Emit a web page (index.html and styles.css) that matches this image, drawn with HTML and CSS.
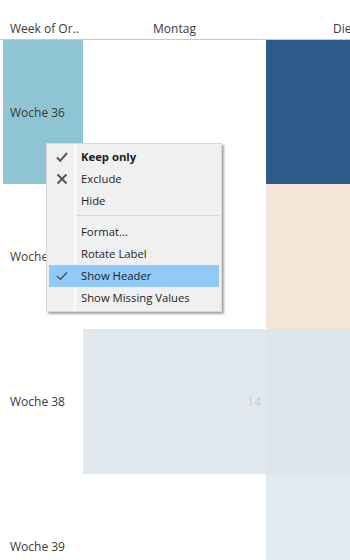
FILE: index.html
```html
<!DOCTYPE html>
<html lang="de">
<head>
    <meta charset="UTF-8">
    <meta name="viewport" content="width=device-width, initial-scale=1.0">
    <title>Wochenansicht</title>
    <link rel="stylesheet" href="styles.css">
</head>
<body>

    <div class="view">
        <div class="grid">
            <div class="head row-label">Week of Or..</div>
            <div class="head">Montag</div>
            <div class="head">Dienstag</div>

            <div class="row-label"><div class="label-fill">Woche 36</div></div>
            <div class="cell"></div>
            <div class="cell dark"></div>

            <div class="row-label"><div class="label-plain">Woche 37</div></div>
            <div class="cell"></div>
            <div class="cell peach"></div>

            <div class="row-label"><div class="label-plain">Woche 38</div></div>
            <div class="cell pale"><span class="value">14</span></div>
            <div class="cell pale2"></div>

            <div class="row-label"><div class="label-plain">Woche 39</div></div>
            <div class="cell"></div>
            <div class="cell pale3"></div>
        </div>

        <div class="menu">
            <div class="item bold">
                <span class="icon">
                    <svg width="14" height="12" viewBox="0 0 14 12"><path d="M2 6.5 L5.2 9.8 L12 2" fill="none" stroke="#555" stroke-width="2"/></svg>
                </span>
                <span class="text">Keep only</span>
            </div>
            <div class="item">
                <span class="icon">
                    <svg width="12" height="12" viewBox="0 0 12 12"><path d="M1.5 1.5 L10.5 10.5 M10.5 1.5 L1.5 10.5" fill="none" stroke="#555" stroke-width="2"/></svg>
                </span>
                <span class="text">Exclude</span>
            </div>
            <div class="item">
                <span class="icon"></span>
                <span class="text">Hide</span>
            </div>
            <div class="sep"></div>
            <div class="item">
                <span class="icon"></span>
                <span class="text">Format...</span>
            </div>
            <div class="item">
                <span class="icon"></span>
                <span class="text">Rotate Label</span>
            </div>
            <div class="item active">
                <span class="icon">
                    <svg width="12" height="10" viewBox="0 0 12 10"><path d="M1 5 L4.3 8.3 L11 1.5" fill="none" stroke="#444" stroke-width="1.2"/></svg>
                </span>
                <span class="text">Show Header</span>
            </div>
            <div class="item">
                <span class="icon"></span>
                <span class="text">Show Missing Values</span>
            </div>
        </div>
    </div>

</body>
</html>
```

FILE: styles.css
```css
body {
    margin: 0;
    font-family: "Open Sans", "Liberation Sans", sans-serif;
    font-size: 12px;
    color: #3a3a3a;
    background-color: #fff;
}

.view {
    position: relative;
    width: 350px;
    height: 560px;
    overflow: hidden;
}

.grid {
    display: grid;
    grid-template-columns: 83px 183px 183px;
    grid-template-rows: 40px 144px 145px 145px 145px;
    width: 449px;
}

.head {
    display: flex;
    align-items: flex-end;
    justify-content: center;
    padding-bottom: 2px;
    border-bottom: 1px solid #c8c8c8;
    white-space: nowrap;
}

.head.row-label {
    justify-content: flex-start;
    padding-left: 10px;
}

.row-label {
    display: flex;
    padding-left: 3px;
}

.label-fill,
.label-plain {
    flex: 1;
    display: flex;
    align-items: center;
    padding-left: 7px;
    white-space: nowrap;
}

.label-fill {
    background-color: #8ec4d4;
}

.cell {
    display: flex;
    align-items: center;
    justify-content: flex-end;
}

.dark {
    background-color: #2d5c8a;
}

.peach {
    background-color: #f5e6d8;
}

.pale {
    background-color: #e1e9ef;
}

.pale2 {
    background-color: #dce6ed;
}

.pale3 {
    background-color: #e2eaef;
}

.value {
    color: #c5ccd2;
    margin-right: 5px;
}

.menu {
    position: absolute;
    left: 46px;
    top: 143px;
    width: 174px;
    padding: 2px 0;
    border: 1px solid #d9d9d9;
    background: linear-gradient(to right, #f0f0f0 27px, #fbfbfb 27px, #fbfbfb 29px, #f0f0f0 29px);
    box-shadow: 2px 2px 2px rgba(0, 0, 0, 0.35);
    font-size: 11.3px;
    color: #1e1e1e;
}

.item {
    display: flex;
    align-items: center;
    height: 22px;
    margin: 0 2px;
}

.item.bold {
    font-weight: bold;
}

.item.active {
    background-color: #91c9f7;
}

.icon {
    width: 26px;
    display: flex;
    justify-content: center;
    align-items: center;
}

.text {
    padding-left: 6px;
    margin-top: -2px;
    white-space: nowrap;
}

.sep {
    height: 1px;
    margin: 3px 2px 5px 30px;
    background-color: #d7d7d7;
}
```
